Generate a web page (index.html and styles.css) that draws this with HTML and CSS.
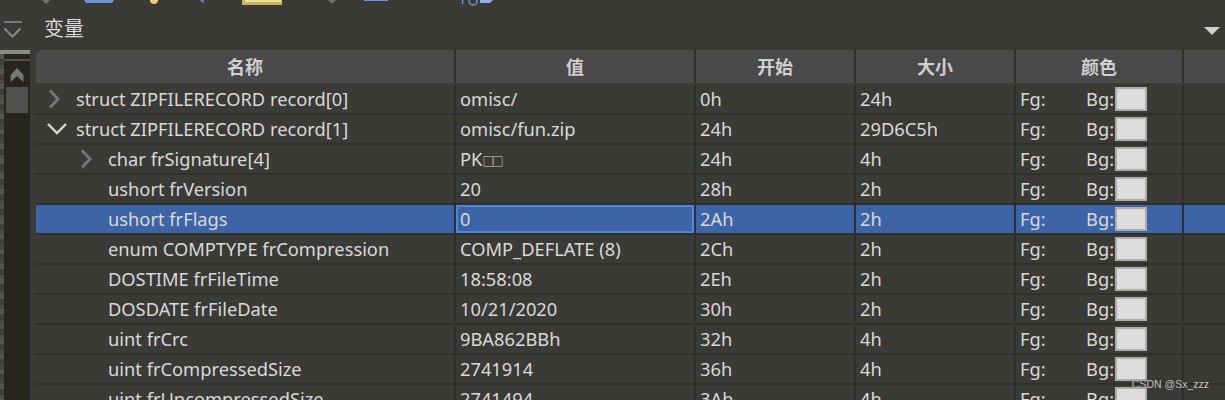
FILE: index.html
```html
<!DOCTYPE html>
<html lang="zh">
<head>
  <meta charset="UTF-8" />
  <title>变量</title>
  <link rel="stylesheet" href="styles.css">
</head>
<body>
  <div class="toolbar">
    <svg width="520" height="6" viewBox="0 0 520 6">
      <path d="M42 0h8l-4 4z" fill="#707070"/>
      <path d="M84 0h30l-2 3h-26z" fill="#6f94d6"/>
      <circle cx="154" cy="0" r="4" fill="#e8d078"/>
      <path d="M199 0h5v3z" fill="#5f86c9"/>
      <rect x="242" y="0" width="40" height="5" fill="#c9b35a"/>
      <rect x="245" y="0" width="36" height="2" fill="#f2e39a"/>
      <path d="M328 0h8l-4 4z" fill="#707070"/>
      <rect x="364" y="0" width="24" height="1" fill="#6f94d6"/>
      <path d="M462.500 0v4M469 0v1a3 3 0 0 0 8 0v-1" stroke="#6f94d6" stroke-width="1.500" fill="none"/>
      <path d="M480 0h13l-3 3h-10z" fill="#8fb0e6"/>
    </svg>
  </div>

  <div class="panel-head">
    <div class="collapse-icon">
      <svg width="24" height="20" viewBox="0 0 24 20">
        <path d="M4 1h18" stroke="#77787a" stroke-width="2"/>
        <path d="M4.500 7.500l8 8 8-8" stroke="#8a8b8c" stroke-width="2" fill="none"/>
      </svg>
    </div>
    <span class="panel-title">变量</span>
    <span class="panel-menu"></span>
  </div>

  <div class="panel-body">
    <div class="side">
      <div class="side-noise"></div>
      <div class="side-bar">
        <div class="side-line"></div>
        <svg class="side-arrow" width="14" height="14" viewBox="0 0 14 14"><path d="M7 0l6.500 7v7l-6.500-6-6.500 6v-7z" fill="#77787a"/></svg>
        <div class="side-thumb"></div>
      </div>
    </div>

    <div class="table">
      <div class="row head">
        <div class="cell c-name">名称</div>
        <div class="cell c-val">值</div>
        <div class="cell c-start">开始</div>
        <div class="cell c-size">大小</div>
        <div class="cell c-color">颜色</div>
        <div class="cell c-end"></div>
      </div>
      <div id="rows"></div>
    </div>
  </div>

  <div class="watermark">CSDN @Sx_zzz</div>

  <script>
    const data = [
      ['struct ZIPFILERECORD record[0]', 'omisc/', '0h', '24h', 0, 'closed'],
      ['struct ZIPFILERECORD record[1]', 'omisc/fun.zip', '24h', '29D6C5h', 0, 'open'],
      ['char frSignature[4]', 'PK<span class="box-char">□□</span>', '24h', '4h', 1, 'closed'],
      ['ushort frVersion', '20', '28h', '2h', 1],
      ['ushort frFlags', '0', '2Ah', '2h', 1, null, true],
      ['enum COMPTYPE frCompression', 'COMP_DEFLATE (8)', '2Ch', '2h', 1],
      ['DOSTIME frFileTime', '18:58:08', '2Eh', '2h', 1],
      ['DOSDATE frFileDate', '10/21/2020', '30h', '2h', 1],
      ['uint frCrc', '9BA862BBh', '32h', '4h', 1],
      ['uint frCompressedSize', '2741914', '36h', '4h', 1],
      ['uint frUncompressedSize', '2741494', '3Ah', '4h', 1]
    ];
    const arrows = {
      closed: '<svg width="16" height="20" viewBox="0 0 16 20"><path d="M2 1.500l8 8.500-8 8.500" stroke="#77787a" stroke-width="2.800" fill="none"/></svg>',
      open: '<svg width="20" height="14" viewBox="0 0 20 14"><path d="M1 2l9 9 9-9" stroke="#d8d8d8" stroke-width="2.400" fill="none"/></svg>'
    };
    const rows = document.getElementById('rows');
    data.forEach((d) => {
      const row = document.createElement('div');
      row.className = 'row item' + (d[6] ? ' selected' : '');
      row.innerHTML = `
        <div class="cell c-name ${d[4] ? 'level-1' : 'level-0'}">
          <span class="arrow ${d[5] || ''}">${d[5] ? arrows[d[5]] : ''}</span><span class="txt">${d[0]}</span>
        </div>
        <div class="cell c-val"><span class="txt val-inner">${d[1]}</span></div>
        <div class="cell c-start"><span class="txt">${d[2]}</span></div>
        <div class="cell c-size"><span class="txt">${d[3]}</span></div>
        <div class="cell c-color"><span class="txt fg">Fg:</span><span class="txt bg">Bg:</span><span class="swatch"></span></div>
        <div class="cell c-end"></div>
      `;
      rows.appendChild(row);
    });
  </script>
</body>
</html>
```

FILE: styles.css
```css
html, body {
  margin: 0;
  padding: 0;
  height: 400px;
  overflow: hidden;
}
body {
  position: relative;
  background: #3a3a36;
  color: #d9d9d9;
  font-family: "Noto Sans", "Noto Sans CJK SC", sans-serif;
  font-size: 18.300px;
}
.toolbar {
  height: 10px;
  overflow: hidden;
}
.toolbar svg {
  display: block;
}
.panel-head {
  display: flex;
  align-items: center;
  height: 40px;
}
.collapse-icon {
  width: 44px;
  height: 20px;
  flex: none;
  margin-top: 2px;
}
.collapse-icon svg {
  display: block;
}
.panel-title {
  flex: 1;
  font-family: "Noto Sans CJK SC", sans-serif;
  font-size: 20px;
  color: #d9d9d9;
  margin-top: -6px;
}
.panel-menu {
  width: 0;
  height: 0;
  margin: 2px 5px 0 0;
  border-left: 8px solid transparent;
  border-right: 8px solid transparent;
  border-top: 8px solid #d0d0d0;
}
.panel-body {
  display: flex;
  height: 350px;
}
.side {
  display: flex;
  width: 36px;
  flex: none;
}
.side-noise {
  width: 4px;
  border-top: 4px solid #8a8a8a;
  background: repeating-linear-gradient(#55554f 0 5px, #3f3f3a 5px 11px, #4b4b46 11px 15px);
}
.side-bar {
  width: 26px;
  border-top: 4px solid #8a8a8a;
  background: #26261f;
}
.side-line {
  height: 2px;
  margin-top: 5px;
  background: #50504e;
}
.side-arrow {
  display: block;
  margin: 7px 0 0 6px;
}
.side-thumb {
  width: 22px;
  height: 26px;
  margin: 5px 0 0 2px;
  background: #50504e;
}
.table {
  flex: 1;
  min-width: 0;
}
.row {
  display: flex;
}
.cell {
  box-sizing: border-box;
  flex: none;
  overflow: hidden;
  white-space: nowrap;
  border-right: 2px solid #2f2f2c;
}
.c-name { width: 420px; }
.c-val { width: 240px; }
.c-start { width: 160px; }
.c-size { width: 160px; }
.c-color { width: 168px; }
.c-end { flex: 1; border-right: 0; }

.head {
  height: 33px;
  background: #4a4a4a;
  border-top-left-radius: 6px;
  margin-bottom: 2px;
}
.head .cell {
  height: 33px;
  line-height: 33px;
  text-align: center;
  font-family: "Noto Sans CJK SC", sans-serif;
  font-size: 18px;
  font-weight: 700;
  color: #d0d0d0;
}
.item {
  height: 30px;
  box-sizing: border-box;
  border-bottom: 2px solid #2f2f2c;
}
.item .cell {
  display: flex;
  align-items: center;
  height: 28px;
  padding-left: 4px;
}
.item .c-name {
  padding-left: 0;
}
.item .c-end {
  padding-left: 0;
}
.txt {
  margin-bottom: 2px;
}
.level-0 .arrow {
  width: 40px;
}
.level-1 .arrow {
  width: 72px;
}
.arrow {
  display: flex;
  align-items: center;
  flex: none;
  box-sizing: border-box;
}
.level-0 .arrow { padding-left: 12px; }
.level-1 .arrow { padding-left: 44px; }
.level-0 .arrow.open { padding-left: 11px; }
.box-char {
  font-size: 11.500px;
  letter-spacing: -2px;
}
.fg {
  width: 66px;
}
.bg {
  width: 29px;
}
.swatch {
  box-sizing: border-box;
  width: 32px;
  height: 24px;
  background: #dcdcdc;
  border: 2px solid #adadad;
}
.val-inner {
  flex: 1;
}
.selected {
  background: #3c64a6;
}
.selected .c-val {
  box-shadow: inset 0 0 0 2px #4f86e0;
  background: #3c64a6;
}
.watermark {
  position: absolute;
  right: 16px;
  bottom: 10px;
  font-family: "Liberation Sans", sans-serif;
  font-size: 10.500px;
  color: #c8c8c8;
  text-shadow: 0 0 1px #222;
}
```
